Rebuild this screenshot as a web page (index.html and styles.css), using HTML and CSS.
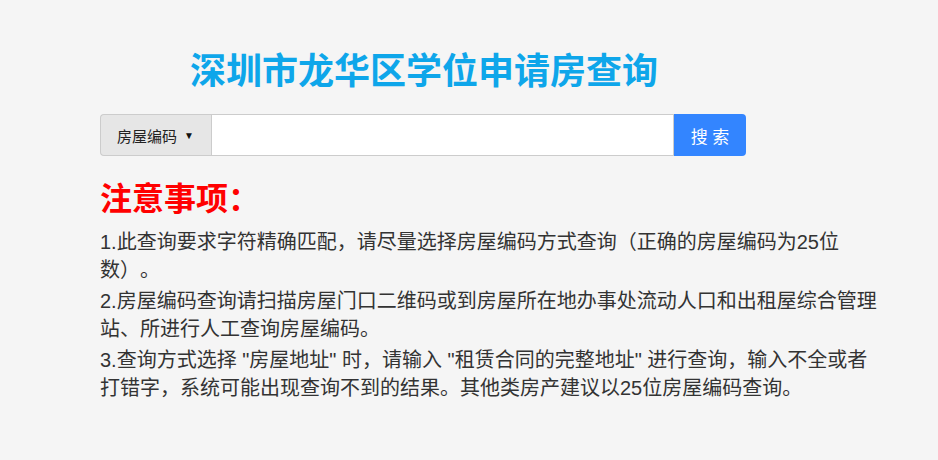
FILE: index.html
```html
<!DOCTYPE html>
<html lang="zh-CN">
<head>
  <meta charset="UTF-8" />
  <meta name="viewport" content="width=device-width, initial-scale=1.0"/>
  <title>深圳市龙华区学位申请房查询</title>
  <link rel="stylesheet" href="styles.css">
</head>
<body>
  <div class="container">
    <h1 class="title">深圳市龙华区学位申请房查询</h1>

    <form class="search" id="searchForm">
      <button type="button" class="search-type">房屋编码 <span class="caret">&#9660;</span></button>
      <input type="text" class="search-input" id="keyword" />
      <button type="submit" class="search-btn">搜 索</button>
    </form>

    <h2 class="notice-title">注意事项：</h2>
    <div class="notice">
      <p>1.此查询要求字符精确匹配，请尽量选择房屋编码方式查询（正确的房屋编码为25位数）。</p>
      <p>2.房屋编码查询请扫描房屋门口二维码或到房屋所在地办事处流动人口和出租屋综合管理站、所进行人工查询房屋编码。</p>
      <p>3.查询方式选择 "房屋地址" 时，请输入 "租赁合同的完整地址" 进行查询，输入不全或者打错字，系统可能出现查询不到的结果。其他类房产建议以25位房屋编码查询。</p>
    </div>
  </div>
</body>
</html>
```

FILE: styles.css
```css
* {
  box-sizing: border-box;
}

body {
  font-family: "Liberation Sans", "Noto Sans CJK SC", sans-serif;
  margin: 0;
  padding: 0;
  background: #f5f5f5;
  color: #333;
  text-spacing-trim: space-all;
}

.container {
  width: 780px;
  margin: 0 0 0 100px;
  padding-top: 49px;
}

.title {
  margin: 0 0 19px 90px;
  font-size: 36px;
  line-height: 46px;
  font-weight: bold;
  color: #0ea6ea;
}

.search {
  display: flex;
  width: 646px;
  height: 42px;
}

.search-type {
  display: flex;
  align-items: center;
  gap: 7px;
  padding: 0 17px 0 16px;
  background: #e6e6e6;
  border: 1px solid #ccc;
  border-right: none;
  border-radius: 4px 0 0 4px;
  font-family: inherit;
  font-size: 15px;
  color: #222;
}

.caret {
  font-size: 10px;
  color: #111;
}

.search-input {
  flex: 1;
  border: 1px solid #ccc;
  background: #fff;
  outline: none;
  font-size: 14px;
  padding: 0 10px;
}

.search-btn {
  width: 72px;
  background: #3385ff;
  color: #fff;
  border: none;
  border-radius: 0 4px 4px 0;
  font-family: inherit;
  font-size: 17px;
  cursor: pointer;
}

.notice-title {
  margin: 23px 0 9px;
  font-size: 32px;
  line-height: 40px;
  font-weight: bold;
  color: #ff0000;
}

.notice p {
  margin: 0 0 3px;
  font-size: 20px;
  line-height: 28px;
}
```
